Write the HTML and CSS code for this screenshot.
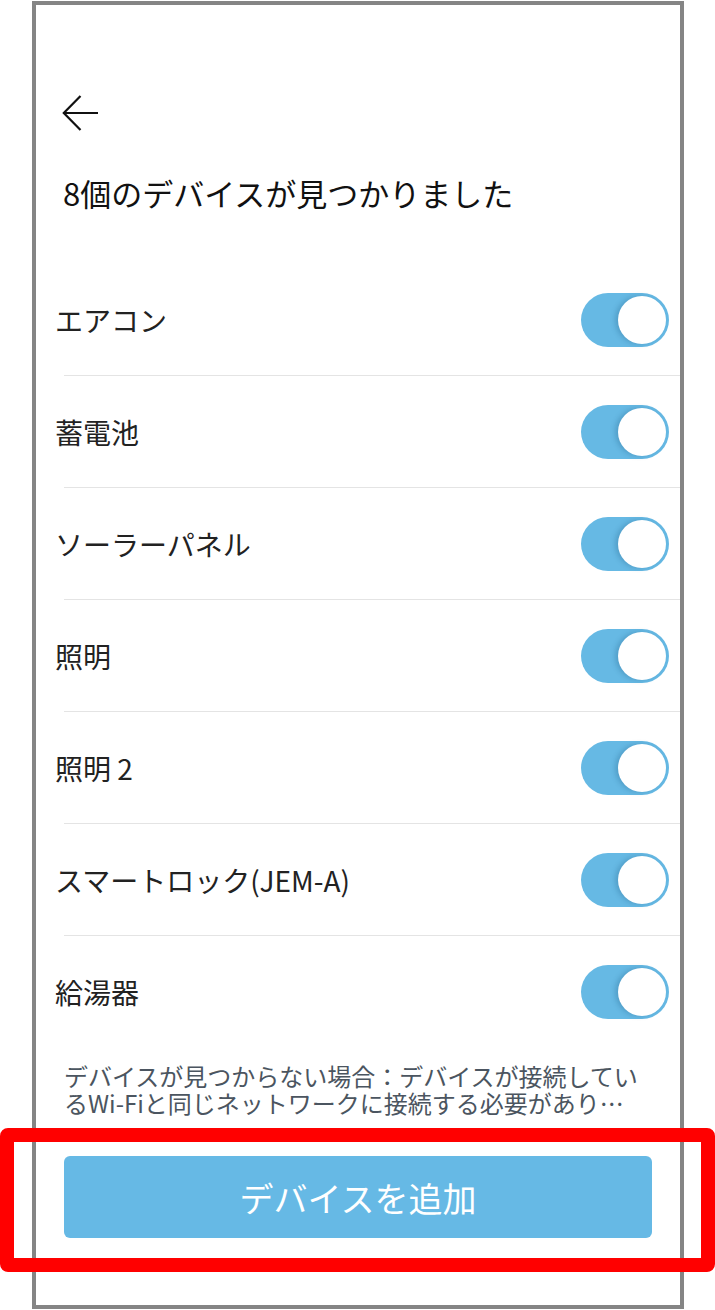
FILE: index.html
```html
<!DOCTYPE html>
<html lang="ja">
<head>
  <meta charset="UTF-8">
  <meta name="viewport" content="width=device-width, initial-scale=1.0">
  <title>デバイス検出</title>
  <link rel="stylesheet" href="styles.css">
</head>
<body>
  <div class="phone">
    <div class="header">
      <svg class="back" width="36" height="36" viewBox="0 0 36 36">
        <path d="M36 18H1.8 M18.5 1 L1.8 18 L18.5 35" fill="none" stroke="#111" stroke-width="2.2"/>
      </svg>
    </div>
    <h1 class="title">8個のデバイスが見つかりました</h1>

    <ul class="list">
      <li class="item"><div class="row"><span class="name">エアコン</span><span class="toggle"><span class="knob"></span></span></div></li>
      <li class="item"><div class="row"><span class="name">蓄電池</span><span class="toggle"><span class="knob"></span></span></div></li>
      <li class="item"><div class="row"><span class="name">ソーラーパネル</span><span class="toggle"><span class="knob"></span></span></div></li>
      <li class="item"><div class="row"><span class="name">照明</span><span class="toggle"><span class="knob"></span></span></div></li>
      <li class="item"><div class="row"><span class="name">照明 2</span><span class="toggle"><span class="knob"></span></span></div></li>
      <li class="item"><div class="row"><span class="name">スマートロック(JEM-A)</span><span class="toggle"><span class="knob"></span></span></div></li>
      <li class="item"><div class="row"><span class="name">給湯器</span><span class="toggle"><span class="knob"></span></span></div></li>
    </ul>

    <p class="note">デバイスが見つからない場合：デバイスが接続しているWi-Fiと同じネットワークに接続する必要があり…</p>

    <button type="button" class="add-btn">デバイスを追加</button>
  </div>

  <div class="highlight"></div>
</body>
</html>
```

FILE: styles.css
```css
body {
  margin: 0;
  background-color: white;
  position: relative;
  font-family: "Noto Sans CJK JP", "Noto Sans", sans-serif;
}

.phone {
  box-sizing: border-box;
  width: 652px;
  height: 1308px;
  margin: 1px 0 0 32px;
  border: 4px solid #858585;
  background: white;
}

.header {
  padding: 90px 0 0 26px;
  height: 36px;
}
.back {
  display: block;
}

.title {
  margin: 41px 0 0;
  padding-left: 27px;
  font-size: 31px;
  font-weight: normal;
  line-height: 42px;
  color: #111;
}

.list {
  list-style: none;
  margin: 50px 0 0;
  padding: 0;
}
.item {
  margin-left: 28px;
  border-bottom: 1px solid #e4e4e4;
}
.item:last-child {
  border-bottom: none;
}
.row {
  display: flex;
  align-items: center;
  justify-content: space-between;
  height: 111px;
  margin-left: -9px;
  padding-right: 11px;
}
.name {
  font-size: 28px;
  color: #222;
}

.toggle {
  position: relative;
  width: 88px;
  height: 54px;
  border-radius: 27px;
  background: #66b9e4;
}
.knob {
  position: absolute;
  top: 3px;
  right: 3px;
  width: 48px;
  height: 48px;
  border-radius: 50%;
  background: white;
  box-shadow: -3px 0 5px rgba(20, 80, 120, 0.25);
}

.note {
  margin: 15px 28px 0;
  font-size: 24px;
  line-height: 27px;
  color: #4b5560;
}

.add-btn {
  display: block;
  box-sizing: border-box;
  width: 588px;
  height: 82px;
  margin: 40px 0 0 28px;
  border: none;
  border-radius: 6px;
  background: #66b9e5;
  color: white;
  font-family: "Noto Sans CJK JP", "Noto Sans", sans-serif;
  font-size: 34px;
}

.highlight {
  position: absolute;
  left: 0;
  top: 1128px;
  box-sizing: border-box;
  width: 715px;
  height: 144px;
  border: 14px solid #ff0000;
  border-radius: 8px;
}
```
